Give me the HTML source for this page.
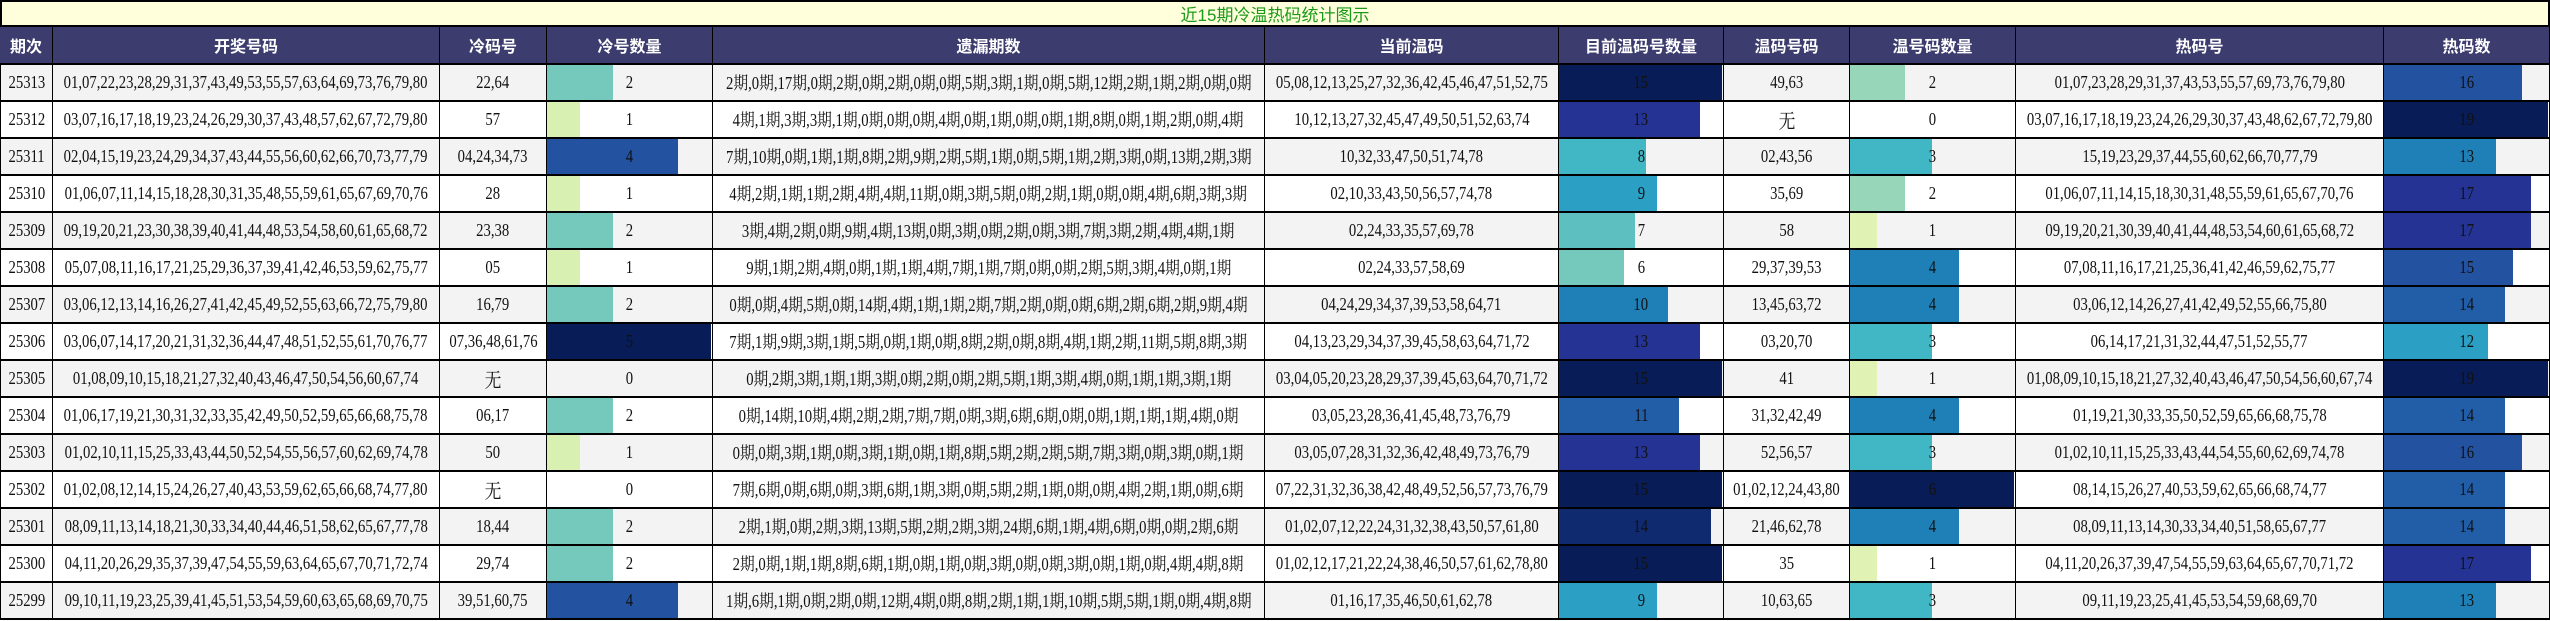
<!DOCTYPE html>
<html><head><meta charset="utf-8"><style>
body{margin:0;width:2550px;height:621px;overflow:hidden;background:#fff;position:relative;font-family:"Liberation Serif","Noto Serif CJK SC",serif}
.c{position:absolute;box-sizing:border-box;border-right:1px solid #000;border-bottom:2px solid #000;display:flex;align-items:center;justify-content:center;white-space:nowrap;overflow:hidden;color:#111}
.c span{display:inline-block;font-size:17.5px;transform:scaleX(.84);position:relative;z-index:2}
.h{background:#3c3c6e;color:#fff;font-family:"Liberation Sans","Noto Sans CJK SC",sans-serif;font-weight:bold;font-size:16px}
.h span{font-size:16px;transform:none}
.bar{position:absolute;left:0;top:0;bottom:0;z-index:1}
#t{position:absolute;left:0;top:0;width:2550px;height:27px;box-sizing:border-box;border:2px solid #000;background:#ffffdc;color:#1a9a1a;font-family:"Liberation Sans","Noto Sans CJK SC",sans-serif;font-size:17px;display:flex;align-items:center;justify-content:center}
</style></head><body>
<div id="t">近15期冷温热码统计图示</div>
<div id="g"></div>
<script>
var X=[0,53,440,547,713,1265,1559,1724,1850,2016,2384,2550];
var H=["期次","开奖号码","冷码号","冷号数量","遗漏期数","当前温码","目前温码号数量","温码号码","温号码数量","热码号","热码数"];
var D=[
["25313","01,07,22,23,28,29,31,37,43,49,53,55,57,63,64,69,73,76,79,80","22,64",2,"2期,0期,17期,0期,2期,0期,2期,0期,0期,5期,3期,1期,0期,5期,12期,2期,1期,2期,0期,0期","05,08,12,13,25,27,32,36,42,45,46,47,51,52,75",15,"49,63",2,"01,07,23,28,29,31,37,43,53,55,57,69,73,76,79,80",16],
["25312","03,07,16,17,18,19,23,24,26,29,30,37,43,48,57,62,67,72,79,80","57",1,"4期,1期,3期,3期,1期,0期,0期,0期,4期,0期,1期,0期,0期,1期,8期,0期,1期,2期,0期,4期","10,12,13,27,32,45,47,49,50,51,52,63,74",13,"无",0,"03,07,16,17,18,19,23,24,26,29,30,37,43,48,62,67,72,79,80",19],
["25311","02,04,15,19,23,24,29,34,37,43,44,55,56,60,62,66,70,73,77,79","04,24,34,73",4,"7期,10期,0期,1期,1期,8期,2期,9期,2期,5期,1期,0期,5期,1期,2期,3期,0期,13期,2期,3期","10,32,33,47,50,51,74,78",8,"02,43,56",3,"15,19,23,29,37,44,55,60,62,66,70,77,79",13],
["25310","01,06,07,11,14,15,18,28,30,31,35,48,55,59,61,65,67,69,70,76","28",1,"4期,2期,1期,1期,2期,4期,4期,11期,0期,3期,5期,0期,2期,1期,0期,0期,4期,6期,3期,3期","02,10,33,43,50,56,57,74,78",9,"35,69",2,"01,06,07,11,14,15,18,30,31,48,55,59,61,65,67,70,76",17],
["25309","09,19,20,21,23,30,38,39,40,41,44,48,53,54,58,60,61,65,68,72","23,38",2,"3期,4期,2期,0期,9期,4期,13期,0期,3期,0期,2期,0期,3期,7期,3期,2期,4期,4期,1期","02,24,33,35,57,69,78",7,"58",1,"09,19,20,21,30,39,40,41,44,48,53,54,60,61,65,68,72",17],
["25308","05,07,08,11,16,17,21,25,29,36,37,39,41,42,46,53,59,62,75,77","05",1,"9期,1期,2期,4期,0期,1期,1期,4期,7期,1期,7期,0期,0期,2期,5期,3期,4期,0期,1期","02,24,33,57,58,69",6,"29,37,39,53",4,"07,08,11,16,17,21,25,36,41,42,46,59,62,75,77",15],
["25307","03,06,12,13,14,16,26,27,41,42,45,49,52,55,63,66,72,75,79,80","16,79",2,"0期,0期,4期,5期,0期,14期,4期,1期,1期,2期,7期,2期,0期,0期,6期,2期,6期,2期,9期,4期","04,24,29,34,37,39,53,58,64,71",10,"13,45,63,72",4,"03,06,12,14,26,27,41,42,49,52,55,66,75,80",14],
["25306","03,06,07,14,17,20,21,31,32,36,44,47,48,51,52,55,61,70,76,77","07,36,48,61,76",5,"7期,1期,9期,3期,1期,5期,0期,1期,0期,8期,2期,0期,8期,4期,1期,2期,11期,5期,8期,3期","04,13,23,29,34,37,39,45,58,63,64,71,72",13,"03,20,70",3,"06,14,17,21,31,32,44,47,51,52,55,77",12],
["25305","01,08,09,10,15,18,21,27,32,40,43,46,47,50,54,56,60,67,74","无",0,"0期,2期,3期,1期,1期,3期,0期,2期,0期,2期,5期,1期,3期,4期,0期,1期,1期,3期,1期","03,04,05,20,23,28,29,37,39,45,63,64,70,71,72",15,"41",1,"01,08,09,10,15,18,21,27,32,40,43,46,47,50,54,56,60,67,74",19],
["25304","01,06,17,19,21,30,31,32,33,35,42,49,50,52,59,65,66,68,75,78","06,17",2,"0期,14期,10期,4期,2期,2期,7期,7期,0期,3期,6期,6期,0期,0期,1期,1期,1期,4期,0期","03,05,23,28,36,41,45,48,73,76,79",11,"31,32,42,49",4,"01,19,21,30,33,35,50,52,59,65,66,68,75,78",14],
["25303","01,02,10,11,15,25,33,43,44,50,52,54,55,56,57,60,62,69,74,78","50",1,"0期,0期,3期,1期,0期,3期,1期,0期,1期,8期,5期,2期,2期,5期,7期,3期,0期,3期,0期,1期","03,05,07,28,31,32,36,42,48,49,73,76,79",13,"52,56,57",3,"01,02,10,11,15,25,33,43,44,54,55,60,62,69,74,78",16],
["25302","01,02,08,12,14,15,24,26,27,40,43,53,59,62,65,66,68,74,77,80","无",0,"7期,6期,0期,6期,0期,3期,6期,1期,3期,0期,5期,2期,1期,0期,0期,4期,2期,1期,0期,6期","07,22,31,32,36,38,42,48,49,52,56,57,73,76,79",15,"01,02,12,24,43,80",6,"08,14,15,26,27,40,53,59,62,65,66,68,74,77",14],
["25301","08,09,11,13,14,18,21,30,33,34,40,44,46,51,58,62,65,67,77,78","18,44",2,"2期,1期,0期,2期,3期,13期,5期,2期,2期,3期,24期,6期,1期,4期,6期,0期,0期,2期,6期","01,02,07,12,22,24,31,32,38,43,50,57,61,80",14,"21,46,62,78",4,"08,09,11,13,14,30,33,34,40,51,58,65,67,77",14],
["25300","04,11,20,26,29,35,37,39,47,54,55,59,63,64,65,67,70,71,72,74","29,74",2,"2期,0期,1期,1期,8期,6期,1期,0期,1期,0期,3期,0期,0期,3期,0期,1期,0期,4期,4期,8期","01,02,12,17,21,22,24,38,46,50,57,61,62,78,80",15,"35",1,"04,11,20,26,37,39,47,54,55,59,63,64,65,67,70,71,72",17],
["25299","09,10,11,19,23,25,39,41,45,51,53,54,59,60,63,65,68,69,70,75","39,51,60,75",4,"1期,6期,1期,0期,2期,0期,12期,4期,0期,8期,2期,1期,1期,10期,5期,5期,1期,0期,4期,8期","01,16,17,35,46,50,61,62,78",9,"10,63,65",3,"09,11,19,23,25,41,45,53,54,59,68,69,70",13]];
var S=[[0.17,"#e0f3b4"],[0.2,"#d9f0b3"],[0.33,"#97d6b9"],[0.4,"#74c8bc"],[0.47,"#5ebfc1"],[0.5,"#41b6c4"],[0.6,"#2c9fc4"],[0.67,"#1f80b8"],[0.74,"#225ea8"],[0.8,"#2352a1"],[0.87,"#253494"],[0.93,"#0f2a6f"],[1,"#081d58"]];
function col(f){var b=S[0][1];for(var i=0;i<S.length;i++){if(f>=S[i][0]-0.02)b=S[i][1];}return b;}
var MX={3:5,6:15,8:6,10:19};
var h="";
for(var j=0;j<11;j++)h+='<div class="c h" style="left:'+X[j]+'px;top:27px;width:'+(X[j+1]-X[j])+'px;height:38px"><span>'+H[j]+'</span></div>';
for(var r=0;r<15;r++){var y=65+r*37,bg=r%2?"#fff":"#f3f3f3";
for(var j=0;j<11;j++){var w=X[j+1]-X[j],v=D[r][j],inner="";
if(MX[j]){var f=v/MX[j];if(f>0)inner='<div class="bar" style="width:'+Math.round(f*(w-2))+'px;background:'+col(f)+'"></div>';}
var fs=(v==="无")?'style="font-size:20px"':'';
h+='<div class="c" style="left:'+X[j]+'px;top:'+y+'px;width:'+w+'px;height:37px;background:'+bg+(j==0?';border-left:1px solid #000':'')+'">'+inner+'<span '+fs+'>'+v+'</span></div>';}}
document.getElementById("g").innerHTML=h;
</script>
</body></html>
